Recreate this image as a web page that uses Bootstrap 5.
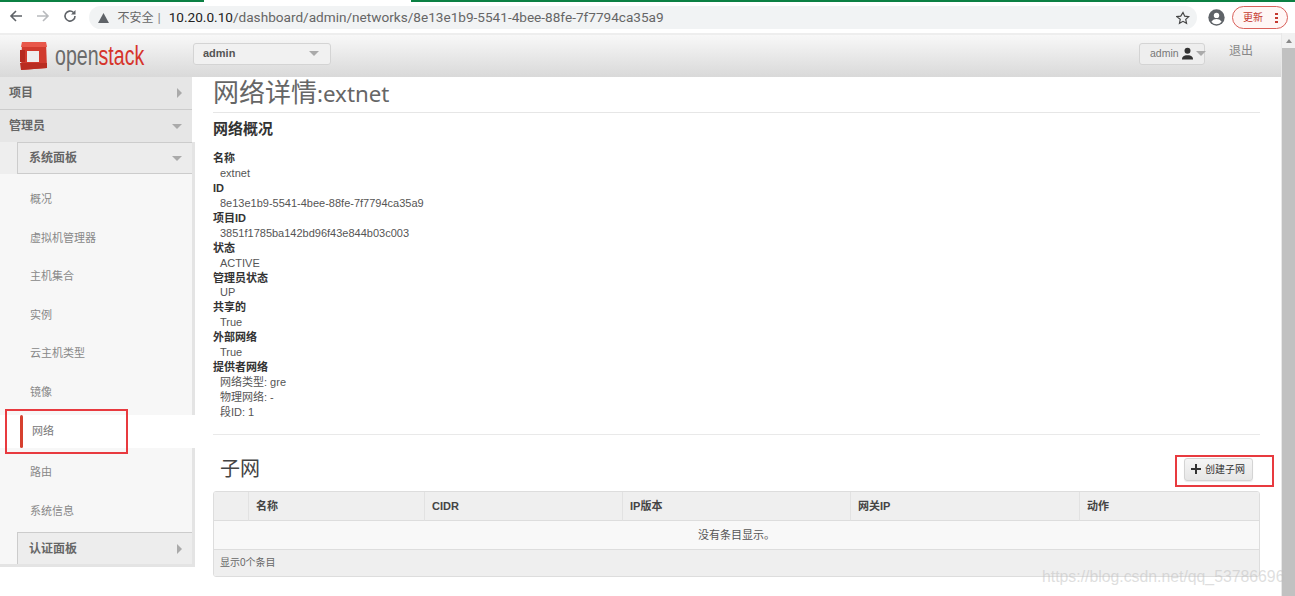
<!doctype html>
<html lang="zh-CN"><head><meta charset="utf-8"><title>网络详情</title>
<link rel="stylesheet" href="https://cdn.jsdelivr.net/npm/bootstrap@5.3.0/dist/css/bootstrap.min.css">
<style>
html,body{height:596px;overflow:hidden;background:#fff}
body{font-family:"Liberation Sans","Noto Sans CJK SC",sans-serif;font-size:12px;color:#555;position:relative}
.chromebar{height:33px;background:#fff;position:relative}
.loadline{height:2px;background:linear-gradient(to right,#0b8043 0,#0b8043 204px,#fff 204px,#fff 411px,#0b8043 411px)}
.navic{position:absolute;top:0;left:0;height:33px;width:85px;padding:9px 0 0 9px;gap:13px}
.omni{position:absolute;left:89px;top:6px;width:1108px;height:23px;background:#f1f3f4;border-radius:12px;padding-left:9px;font-family:Roboto,"Noto Sans CJK SC",sans-serif;font-size:13.6px;line-height:23px;color:#666;white-space:nowrap}
.omni b{font-weight:400;color:#222}
.omni .warn{font-size:12px;margin-left:1px}
.sepbar{margin:0 8px 0 4px;color:#888}
.topicons{position:absolute;top:6px;left:1176px}
.acct{margin-left:18px;margin-right:7px}
.updatepill{width:56px;height:23px;border:1px solid #d9605a;border-radius:12px;color:#c5392f;font-size:10px;line-height:21px;padding-left:10px;position:relative;background:#fff6f5}
.updatepill i{position:absolute;right:9px;top:5px;width:3px;height:11px;background:radial-gradient(circle,#c5392f 1.4px,transparent 1.5px) 0 0/3px 4px repeat-y}
.shell{height:563px;overflow:hidden}
.pagewrap{flex:1 1 auto;min-width:0;border-top:2px solid #eee}
.sbar{width:14px;background:#f1f1f1;border-left:1px solid #e8e8e8;padding-top:15px;position:relative}
.sbar::before{content:"";position:absolute;left:4px;top:6px;border:3px solid transparent;border-top:0;border-bottom:4px solid #888}
.sbar div{height:100%;background:#c1c1c1}
.osheader{height:42px;background:linear-gradient(#f8f8f8,#d9d9d9);padding:0!important}
.logoarea{width:193px;padding-left:17px;gap:7px}
.logotext{display:inline-block;width:90px;font-size:27px;line-height:30px;color:#6b6b6b;transform:scaleX(.725);transform-origin:0 50%;white-space:nowrap}
.logotext span{color:#d6342b}
.projsel{width:138px;height:22px;margin-bottom:5px;background:#f1f1f1;border:1px solid #d4d4d4;border-radius:3px;padding:0 11px 0 9px;font-weight:700;color:#555;font-size:11px}
.caretd{flex:none;width:0;height:0;border:5px solid transparent;border-top:5px solid #aaa;border-bottom:0}
.caretr{flex:none;width:0;height:0;border:5px solid transparent;border-left:5px solid #aaa;border-right:0}
.userbtn{width:66px;height:22px;margin-bottom:5px;background:#eee;border:1px solid #d4d4d4;border-radius:3px;padding:0 1px 0 10px;font-size:10.5px;color:#777;margin-left:auto;gap:2px}
.userbtn svg{flex:none}
.logoutlnk{width:76px;padding-left:24px;color:#888;font-size:12px;margin-bottom:10px;text-decoration:none}
.contentrow{height:519px}
.sidecol{width:197px;flex:none}
.toprow{height:33px;background:#e6e6e6;padding:0 10px 0 9px;margin-right:5px;font-size:12px;font-weight:700;color:#666;border-bottom:1px solid #ccc}
.toprow.second{height:32px;border-bottom:0}
.subhead{height:32px;margin-left:17px;background:#ececec;border:1px solid #ccc;border-right:0;padding:0 10px 0 11px;font-size:12px;font-weight:700;color:#666}
.sidebody{background:#f7f7f7;margin-right:2px;border-right:3px solid #e4e4e4}
.firsthead{background-clip:padding-box;margin-bottom:6px}
.headband{background:#eee}
.sideitem{height:38.5px;padding-left:30px;font-size:11px;color:#888;display:flex;align-items:center;text-decoration:none}
.sideactive{height:33px;background:#fff;margin-right:-5px;padding-left:32px;position:relative;margin-top:4px;margin-bottom:5px;color:#777;font-size:11px;display:flex;align-items:center;text-decoration:none}
.sideactive::before{content:"";position:absolute;left:20px;top:0;width:3px;height:33px;background:#d6402f;border-radius:2px}
.lastpanel{margin-top:2px;border-bottom:0;background:#ededed}
.sidefoot{height:3px;background:#e4e4e4}
.maincol{flex:1 1 auto;min-width:0;padding:0 21px 0 16px}
.pagetitle{font-family:"Noto Sans","Noto Sans CJK SC",sans-serif;font-size:26px;line-height:30px;font-weight:400;color:#666;margin:0;padding-bottom:5px;height:36px;border-bottom:1px solid #e6e6e6}
.pagetitle span{font-size:22.3px}
.sectitle{font-size:15px;line-height:20px;font-weight:700;color:#333;margin:6px 0 12px}
.detaillist{margin:0;line-height:14.94px;font-size:11px}
.detaillist dt{font-weight:700;color:#333}
.detaillist dd{margin:0 0 0 7px;color:#555}
.softrule{margin:14px 0 0;border:0;border-top:1px solid #e9e9e9;opacity:1}
.subnethead{height:56px;padding:13px 7px 0 7px}
.subnethead h3{font-size:20px;font-weight:400;color:#444;margin:0}
.createbtn{width:69px;height:23px;padding:0 0 0 6px;background:linear-gradient(#f5f5f5,#e6e6e6);border:1px solid #d4d4d4;border-radius:3px;font-size:10px;color:#333;gap:4px;box-shadow:0 1px 1px rgba(0,0,0,.08);--bs-btn-font-size:10px}
.nettable{width:1047px;margin:0;table-layout:fixed;border:1px solid #ddd;border-collapse:separate;border-spacing:0;border-radius:3px;overflow:hidden;font-size:11px}
.nettable th{height:29px;background:#efefef;font-weight:700;color:#444;padding:0 7px;border-right:1px solid #e2e2e2;border-bottom:1px solid #ddd;vertical-align:middle}
.nettable th:last-child{border-right:0}
.nettable .emptycell{height:29px;background:#f8f8f8;text-align:center;color:#555;font-size:11px;padding:0;border-bottom:1px solid #ddd;vertical-align:middle}
.nettable .footcell{height:26px;background:#efefef;color:#666;font-size:10px;padding:0 6px;border:0;vertical-align:middle}
.annot{position:absolute;border:2px solid #e83a3f;pointer-events:none}
.annot1{left:5px;top:409px;width:123px;height:45px}
.annot2{left:1175px;top:455px;width:99px;height:32px}
.wmark{position:absolute;left:1042px;top:565px;font-size:15.8px;color:rgba(190,190,190,.5);white-space:nowrap}
</style></head>
<body>
<header class="chromebar">
  <div class="loadline"></div>
  <div class="navic d-flex align-items-start">
    <svg width="14" height="14" viewBox="0 0 14 14" fill="none" stroke="#5f6368" stroke-width="1.6"><path d="M13 7H2M7 2 2 7l5 5"/></svg>
    <svg width="14" height="14" viewBox="0 0 14 14" fill="none" stroke="#b8babd" stroke-width="1.6"><path d="M1 7h11M7 2l5 5-5 5"/></svg>
    <svg width="14" height="14" viewBox="0 0 14 14" fill="none" stroke="#5f6368" stroke-width="1.6"><path d="M12 7a5 5 0 1 1-1.5-3.5"/><path d="M12.5 1v4.500H8z" fill="#5f6368" stroke="none"/></svg>
  </div>
  <div class="omni">
    <svg width="11" height="10" viewBox="0 0 12 11" class="me-1"><path d="M6 0l6 11H0z" fill="#5f6368"/></svg> <span class="warn">不安全</span><span class="sepbar">|</span><b>10.20.0.10</b>/dashboard/admin/networks/8e13e1b9-5541-4bee-88fe-7f7794ca35a9
  </div>
  <div class="topicons d-flex align-items-center">
    <svg width="14" height="14" viewBox="0 0 24 24" fill="none" stroke="#444" stroke-width="2"><path d="M12 2.500l2.900 6.300 6.900.8-5.100 4.700 1.400 6.800-6.100-3.400-6.100 3.400 1.400-6.800L1.200 9.600l6.900-.8z"/></svg>
    <svg width="17" height="17" viewBox="0 0 24 24" class="acct"><circle cx="12" cy="12" r="11.500" fill="#5f6368"/><circle cx="12" cy="9" r="3.800" fill="#fff"/><path d="M4.800 18c2-3 4.500-4 7.200-4s5.200 1 7.200 4c-2 2.400-4.500 3.500-7.200 3.500S6.800 20.400 4.800 18z" fill="#fff"/></svg>
    <div class="updatepill">更新<i></i></div>
  </div>
</header>
<div class="shell d-flex">
  <div class="pagewrap">
    <nav class="navbar osheader d-flex flex-nowrap align-items-center">
      <div class="logoarea d-flex align-items-center">
        <svg width="31" height="30" viewBox="0 0 31 30"><path d="M5 1h24l1 26-26 2z" fill="#d13a2e"/><path d="M5 1h24l1 5H4z" fill="#e8574a"/><path d="M3 9h5v12H3z" fill="#b52a20"/><rect x="10" y="10" width="12" height="11" fill="#eee"/><path d="M3 22h27v5l-26 2z" fill="#b92d22"/></svg>
        <span class="logotext">open<span>stack</span></span>
      </div>
      <div class="projsel d-flex align-items-center justify-content-between"><span>admin</span><span class="caretd"></span></div>
      <div class="userbtn d-flex align-items-center"><span>admin</span><svg width="13" height="13" viewBox="0 0 13 13"><circle cx="6.500" cy="3.800" r="3" fill="#333"/><path d="M1 12.500c0-3 2-3.700 3.800-4.200h3.400C10 8.800 12 9.500 12 12.500z" fill="#333"/></svg><span class="caretd"></span></div>
      <a class="logoutlnk" href="#">退出</a>
    </nav>
    <div class="contentrow d-flex">
      <aside class="sidecol">
        <div class="toprow d-flex align-items-center justify-content-between"><span>项目</span><span class="caretr"></span></div>
        <div class="toprow second d-flex align-items-center justify-content-between"><span>管理员</span><span class="caretd"></span></div>
        <div class="sidebody">
          <div class="headband"><div class="subhead firsthead d-flex align-items-center justify-content-between"><span>系统面板</span><span class="caretd"></span></div></div>
          <a class="sideitem" href="#">概况</a>
          <a class="sideitem" href="#">虚拟机管理器</a>
          <a class="sideitem" href="#">主机集合</a>
          <a class="sideitem" href="#">实例</a>
          <a class="sideitem" href="#">云主机类型</a>
          <a class="sideitem" href="#">镜像</a>
          <a class="sideactive" href="#">网络</a>
          <a class="sideitem" href="#">路由</a>
          <a class="sideitem" href="#">系统信息</a>
          <div class="subhead lastpanel d-flex align-items-center justify-content-between"><span>认证面板</span><span class="caretr"></span></div>
          <div class="sidefoot"></div>
        </div>
      </aside>
      <main class="maincol">
        <h1 class="pagetitle">网络详情<span>:extnet</span></h1>
        <h2 class="sectitle">网络概况</h2>
        <dl class="detaillist">
          <dt>名称</dt><dd>extnet</dd>
          <dt>ID</dt><dd>8e13e1b9-5541-4bee-88fe-7f7794ca35a9</dd>
          <dt>项目ID</dt><dd>3851f1785ba142bd96f43e844b03c003</dd>
          <dt>状态</dt><dd>ACTIVE</dd>
          <dt>管理员状态</dt><dd>UP</dd>
          <dt>共享的</dt><dd>True</dd>
          <dt>外部网络</dt><dd>True</dd>
          <dt>提供者网络</dt><dd>网络类型: gre</dd><dd>物理网络: -</dd><dd>段ID: 1</dd>
        </dl>
        <hr class="softrule">
        <div class="subnethead d-flex align-items-center justify-content-between">
          <h3>子网</h3>
          <button type="button" class="btn createbtn d-flex align-items-center"><svg width="10" height="10" viewBox="0 0 10 10"><path d="M4 0h2v4h4v2H6v4H4V6H0V4h4z" fill="#333"/></svg>创建子网</button>
        </div>
        <table class="table nettable">
          <colgroup><col style="width:35px"><col style="width:176px"><col style="width:198px"><col style="width:228px"><col style="width:229px"><col></colgroup>
          <thead><tr><th></th><th>名称</th><th>CIDR</th><th>IP版本</th><th>网关IP</th><th>动作</th></tr></thead>
          <tbody><tr><td colspan="6" class="emptycell">没有条目显示。</td></tr></tbody>
          <tfoot><tr><td colspan="6" class="footcell">显示0个条目</td></tr></tfoot>
        </table>
      </main>
    </div>
  </div>
  <div class="sbar"><div></div></div>
</div>
<div class="annot annot1"></div>
<div class="annot annot2"></div>
<div class="wmark">https://blog.csdn.net/qq_53786696</div>
<script src="https://cdn.jsdelivr.net/npm/bootstrap@5.3.0/dist/js/bootstrap.bundle.min.js"></script>
</body></html>
